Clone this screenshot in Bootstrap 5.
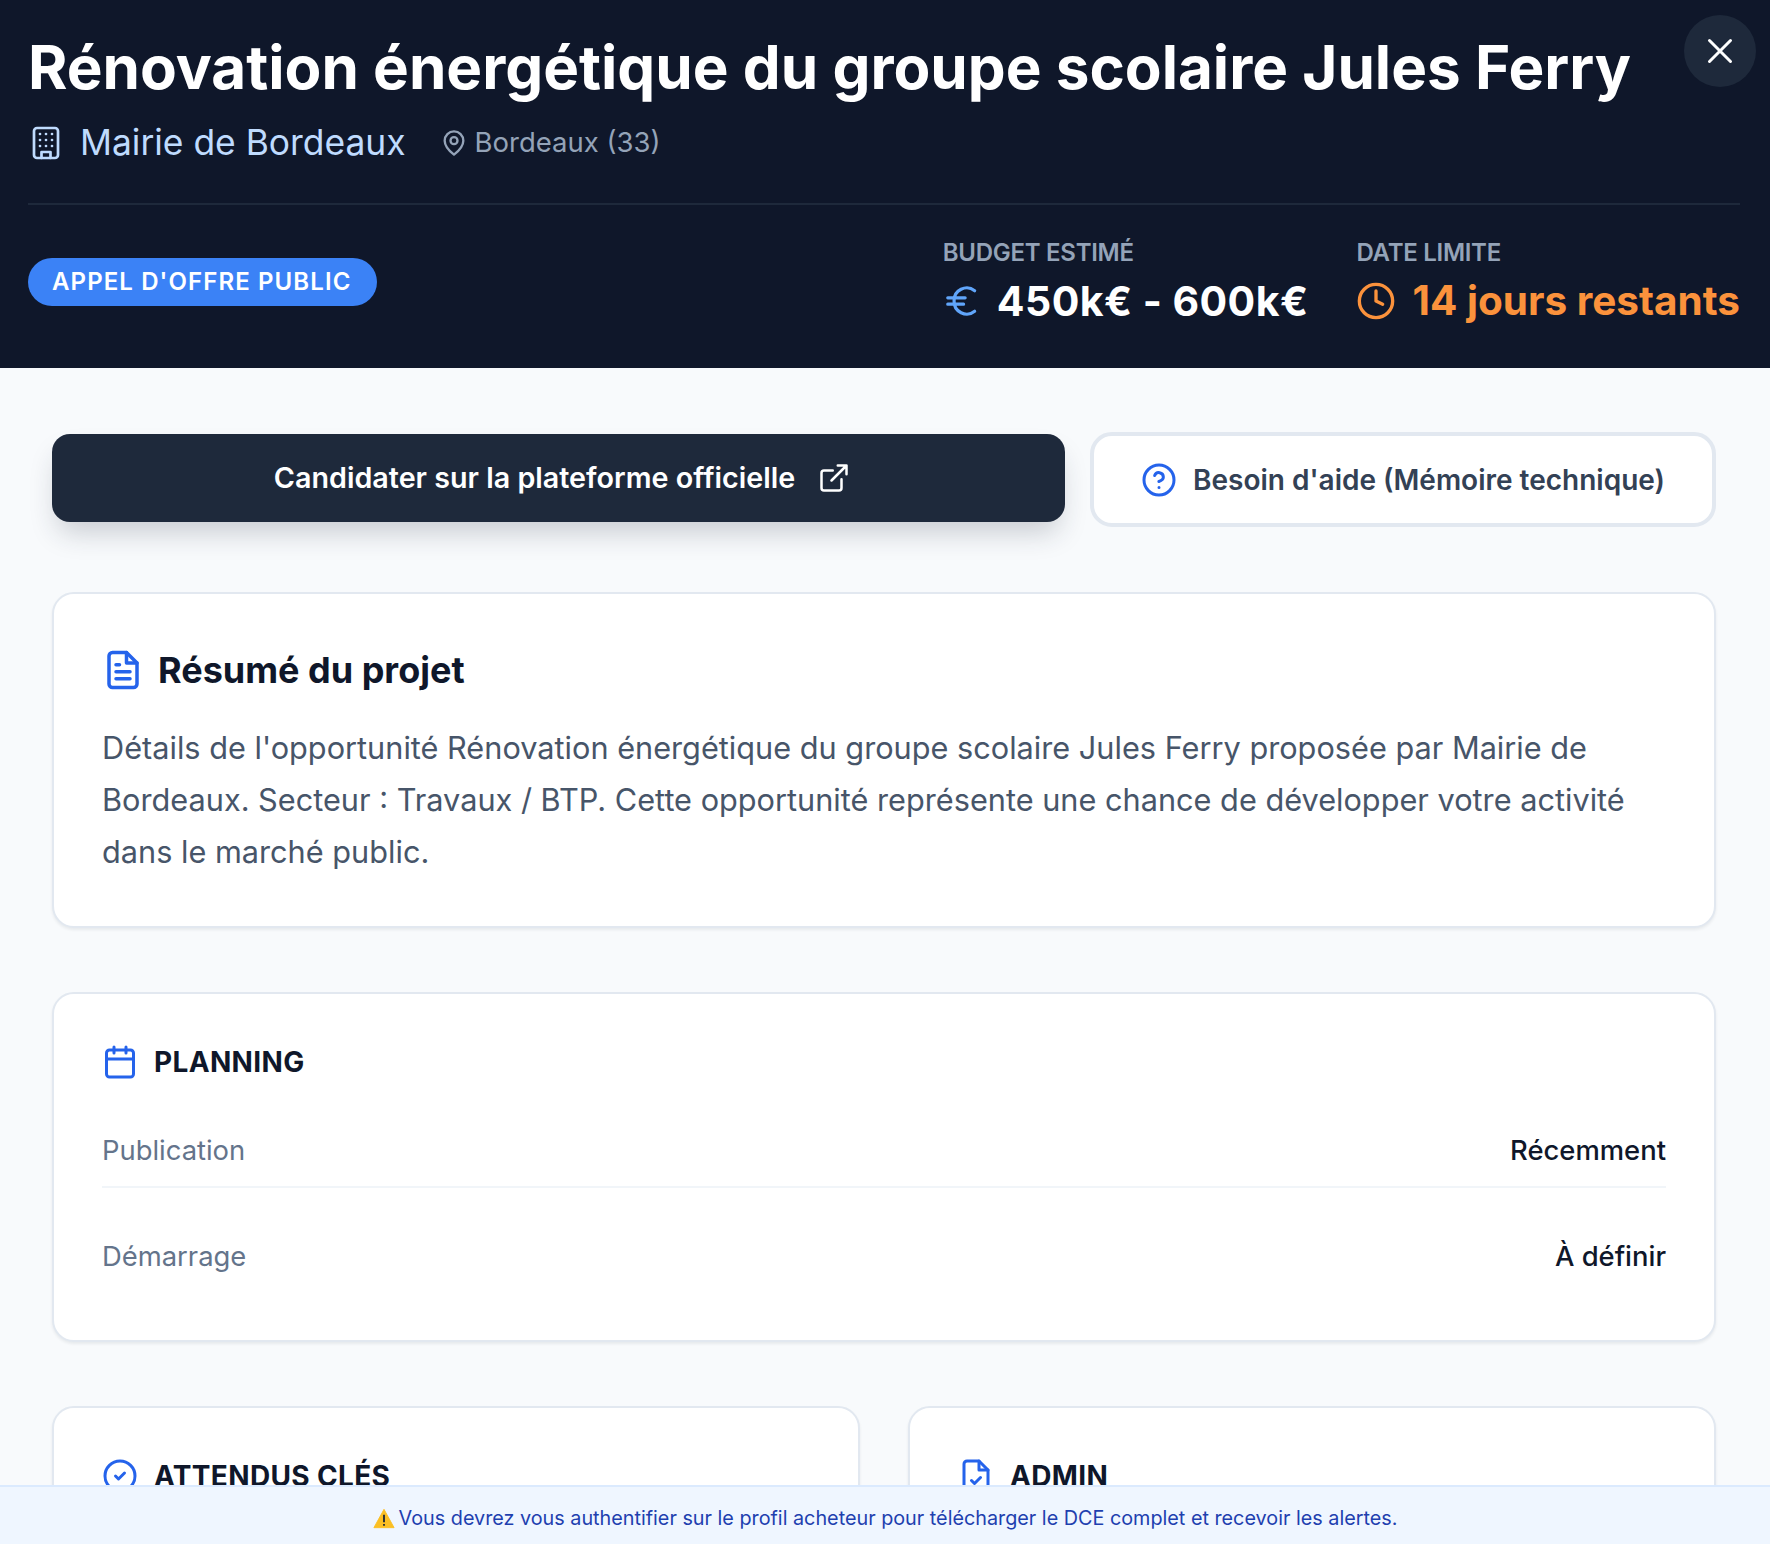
<!DOCTYPE html>
<html lang="fr">
<head>
  <meta charset="UTF-8" />
  <meta name="viewport" content="width=device-width, initial-scale=1" />
  <title>Détail opportunité</title>
  <link href="https://cdn.jsdelivr.net/npm/bootstrap@5.3.1/dist/css/bootstrap.min.css" rel="stylesheet" />
  <style>
    body { font-family: Inter, "Liberation Sans", sans-serif; background: #f8fafc; color: #0f172a; }
    svg { flex: none; display: block; }
    .sheet { height: 100vh; overflow: hidden; }
    .hero { background: #0f172a; height: 368px; padding: 0 30px 0 28px; }
    .hero-title { font-size: 60.15px; font-weight: 700; line-height: 70px; color: #fff; margin: 33px 0 0; }
    .close-btn { top: 15px; right: 14px; width: 72px; height: 72px; background: #1e293b; border: 0; color: #fff; }
    .buyer { font-size: 35.4px; line-height: 44px; color: #bfdbfe; }
    .place { font-size: 27.5px; color: #94a3b8; }
    .place-icon { margin-left: 34px; margin-right: 7px; }
    .hero-meta { margin-top: 18px; height: 44px; }
    .hero-rule { border-top: 2px solid #1e293b; margin-top: 38px; }
    .hero-stats { margin-top: 33px; }
    .kind-pill { background: #3b82f6; color: #fff; font-size: 24px; font-weight: 600; letter-spacing: 1.1px; height: 48px; padding: 0 26px 0 24px; }
    .kpi-group { gap: 48px; }
    .kpi-label { font-size: 24px; font-weight: 600; line-height: 30px; color: #94a3b8; letter-spacing: -.28px; }
    .kpi-value { font-size: 41px; font-weight: 700; line-height: 50px; color: #fff; letter-spacing: .45px; }
    .kpi-value.is-late { color: #fb923c; font-size: 40.5px; letter-spacing: 0; }
    .content { padding: 65px 54px 0 52px; }
    .apply-btn { width: 1013px; height: 88px; margin-top: 1px; padding-left: 12px; background: #1e293b; color: #fff; border: 0; border-radius: 18px; font-size: 28.7px; font-weight: 600; box-shadow: 0 16px 28px -6px rgba(30,41,59,.22); }
    .help-btn { width: 626px; height: 95px; margin-top: -1px; background: #fff; color: #334155; border: 4px solid #e2e8f0; border-radius: 22px; font-size: 28px; font-weight: 600; }
    .panel { background: #fff; border: 2px solid #e2e8f0; border-radius: 22px; box-shadow: 0 2px 3px rgba(15,23,42,.07); padding: 50px 48px 48px; }
    .panel-summary { margin-top: 65px; height: 336px; padding-top: 54px; }
    .panel-planning { margin-top: 64px; height: 350px; }
    .panel-pair { margin-top: 64px; }
    .panel-half { width: 808px; height: 300px; }
    .summary-head { gap: 14px; }
    .panel-title { font-size: 36px; font-weight: 700; line-height: 44px; margin: 0; }
    .panel-text { font-size: 30.7px; line-height: 52px; color: #475569; margin: 30px 0 0; }
    .section-title { font-size: 28px; font-weight: 700; letter-spacing: .35px; line-height: 36px; margin: 0; }
    .fact-row { font-size: 27.4px; line-height: 36px; padding: 50px 0 18px; }
    .fact-row:first-child { padding-top: 52px; }
    .fact-row + .fact-row { border-top: 2px solid #f1f5f9; }
    .fact-key { color: #64748b; }
    .fact-val { color: #0f172a; font-weight: 500; }
    .notice { background: #eff6ff; border-top: 2px solid #dbeafe; color: #1e40af; font-size: 19.8px; height: 59px; padding-top: 6px; }
  </style>
</head>
<body>
  <div class="sheet d-flex flex-column">
    <!-- Header -->
    <header class="hero position-relative flex-shrink-0">
      <button class="close-btn position-absolute rounded-circle d-flex align-items-center justify-content-center" aria-label="Fermer">
        <svg width="36" height="36" viewBox="0 0 24 24" fill="none" stroke="currentColor" stroke-width="2" stroke-linecap="round"><path d="M5 5l14 14M19 5L5 19"/></svg>
      </button>
      <h1 class="hero-title">Rénovation énergétique du groupe scolaire Jules Ferry</h1>
      <div class="hero-meta d-flex align-items-center">
        <svg width="36" height="36" viewBox="0 0 24 24" fill="none" stroke="#bfdbfe" stroke-width="1.8" stroke-linecap="round" stroke-linejoin="round"><rect x="4" y="2" width="16" height="20" rx="2"/><path d="M9 22v-4h6v4M8 6h.01M12 6h.01M16 6h.01M8 10h.01M12 10h.01M16 10h.01M8 14h.01M12 14h.01M16 14h.01"/></svg>
        <span class="buyer ms-3">Mairie de Bordeaux</span>
        <svg class="place-icon" width="28" height="28" viewBox="0 0 24 24" fill="none" stroke="#94a3b8" stroke-width="2" stroke-linecap="round" stroke-linejoin="round"><path d="M20 10c0 5-5.500 10-8 12-2.500-2-8-7-8-12a8 8 0 0 1 16 0z"/><circle cx="12" cy="10" r="3"/></svg>
        <span class="place">Bordeaux (33)</span>
      </div>
      <div class="hero-rule"></div>
      <div class="hero-stats d-flex justify-content-between align-items-center">
        <span class="kind-pill rounded-pill d-inline-flex align-items-center">APPEL D'OFFRE PUBLIC</span>
        <div class="kpi-group d-flex">
          <div>
            <div class="kpi-label">BUDGET ESTIMÉ</div>
            <div class="kpi-value d-flex align-items-center mt-2">
              <svg class="me-3" width="38" height="38" viewBox="0 0 24 24" fill="none" stroke="#60a5fa" stroke-width="2" stroke-linecap="round" stroke-linejoin="round"><path d="M20 5.500A8 8 0 0 0 7 12a8 8 0 0 0 13 6.500M3 10h11M3 14h10"/></svg>
              <span>450k€ - 600k€</span>
            </div>
          </div>
          <div>
            <div class="kpi-label">DATE LIMITE</div>
            <div class="kpi-value is-late d-flex align-items-center mt-2">
              <svg class="me-3" width="40" height="40" viewBox="0 0 24 24" fill="none" stroke="#fb923c" stroke-width="2" stroke-linecap="round" stroke-linejoin="round"><circle cx="12" cy="12" r="10"/><path d="M12 6v6l4 2"/></svg>
              <span>14 jours restants</span>
            </div>
          </div>
        </div>
      </div>
    </header>

    <!-- Scrollable body -->
    <main class="content flex-grow-1 overflow-hidden">
      <div class="d-flex justify-content-between align-items-start">
        <button class="apply-btn d-flex align-items-center justify-content-center gap-4">
          <span>Candidater sur la plateforme officielle</span>
          <svg width="30" height="30" viewBox="0 0 24 24" fill="none" stroke="currentColor" stroke-width="2" stroke-linecap="round" stroke-linejoin="round"><path d="M18 13v7a2 2 0 0 1-2 2H4a2 2 0 0 1-2-2V8a2 2 0 0 1 2-2h7M15 2h7v7M10 14L22 2"/></svg>
        </button>
        <button class="help-btn d-flex align-items-center justify-content-center gap-3">
          <svg width="36" height="36" viewBox="0 0 24 24" fill="none" stroke="#2563eb" stroke-width="2" stroke-linecap="round" stroke-linejoin="round"><circle cx="12" cy="12" r="10"/><path d="M9.100 9a3 3 0 0 1 5.800 1c0 2-3 3-3 3M12 17h.01"/></svg>
          <span>Besoin d'aide (Mémoire technique)</span>
        </button>
      </div>

      <section class="panel panel-summary">
        <div class="summary-head d-flex align-items-center">
          <svg width="42" height="42" viewBox="0 0 24 24" fill="none" stroke="#2563eb" stroke-width="2" stroke-linecap="round" stroke-linejoin="round"><path d="M14 2H6a2 2 0 0 0-2 2v16a2 2 0 0 0 2 2h12a2 2 0 0 0 2-2V8z"/><path d="M14 2v6h6M16 13H8M16 17H8M10 9H8"/></svg>
          <h2 class="panel-title">Résumé du projet</h2>
        </div>
        <p class="panel-text">Détails de l'opportunité Rénovation énergétique du groupe scolaire Jules Ferry proposée par Mairie de Bordeaux. Secteur : Travaux / BTP. Cette opportunité représente une chance de développer votre activité dans le marché public.</p>
      </section>

      <section class="panel panel-planning">
        <div class="d-flex align-items-center gap-3">
          <svg width="36" height="36" viewBox="0 0 24 24" fill="none" stroke="#2563eb" stroke-width="2" stroke-linecap="round" stroke-linejoin="round"><rect x="3" y="4" width="18" height="18" rx="2"/><path d="M16 2v4M8 2v4M3 10h18"/></svg>
          <h3 class="section-title">PLANNING</h3>
        </div>
        <div>
          <div class="fact-row d-flex justify-content-between"><span class="fact-key">Publication</span><span class="fact-val">Récemment</span></div>
          <div class="fact-row d-flex justify-content-between"><span class="fact-key">Démarrage</span><span class="fact-val">À définir</span></div>
        </div>
      </section>

      <div class="panel-pair d-flex justify-content-between">
        <section class="panel panel-half">
          <div class="d-flex align-items-center gap-3">
            <svg width="36" height="36" viewBox="0 0 24 24" fill="none" stroke="#2563eb" stroke-width="2" stroke-linecap="round" stroke-linejoin="round"><circle cx="12" cy="12" r="10"/><path d="M9 12l2 2 4-4"/></svg>
            <h3 class="section-title">ATTENDUS CLÉS</h3>
          </div>
        </section>
        <section class="panel panel-half">
          <div class="d-flex align-items-center gap-3">
            <svg width="36" height="36" viewBox="0 0 24 24" fill="none" stroke="#2563eb" stroke-width="2" stroke-linecap="round" stroke-linejoin="round"><path d="M14 2H6a2 2 0 0 0-2 2v16a2 2 0 0 0 2 2h12a2 2 0 0 0 2-2V8z"/><path d="M14 2v6h6M9 15l2 2 4-4"/></svg>
            <h3 class="section-title">ADMIN</h3>
          </div>
        </section>
      </div>
    </main>

    <!-- Bottom notice -->
    <footer class="notice flex-shrink-0 d-flex align-items-center justify-content-center gap-1">
      <svg width="22" height="21" viewBox="0 0 24 22"><path d="M12 1L23 21H1z" fill="#fbbf24" stroke="#fbbf24" stroke-linejoin="round"/><path d="M12 7v8M12 17v2" stroke="#1f2937" stroke-width="2"/></svg>
      <span>Vous devrez vous authentifier sur le profil acheteur pour télécharger le DCE complet et recevoir les alertes.</span>
    </footer>
  </div>
  <script src="https://cdn.jsdelivr.net/npm/bootstrap@5.3.1/dist/js/bootstrap.bundle.min.js"></script>
</body>
</html>
